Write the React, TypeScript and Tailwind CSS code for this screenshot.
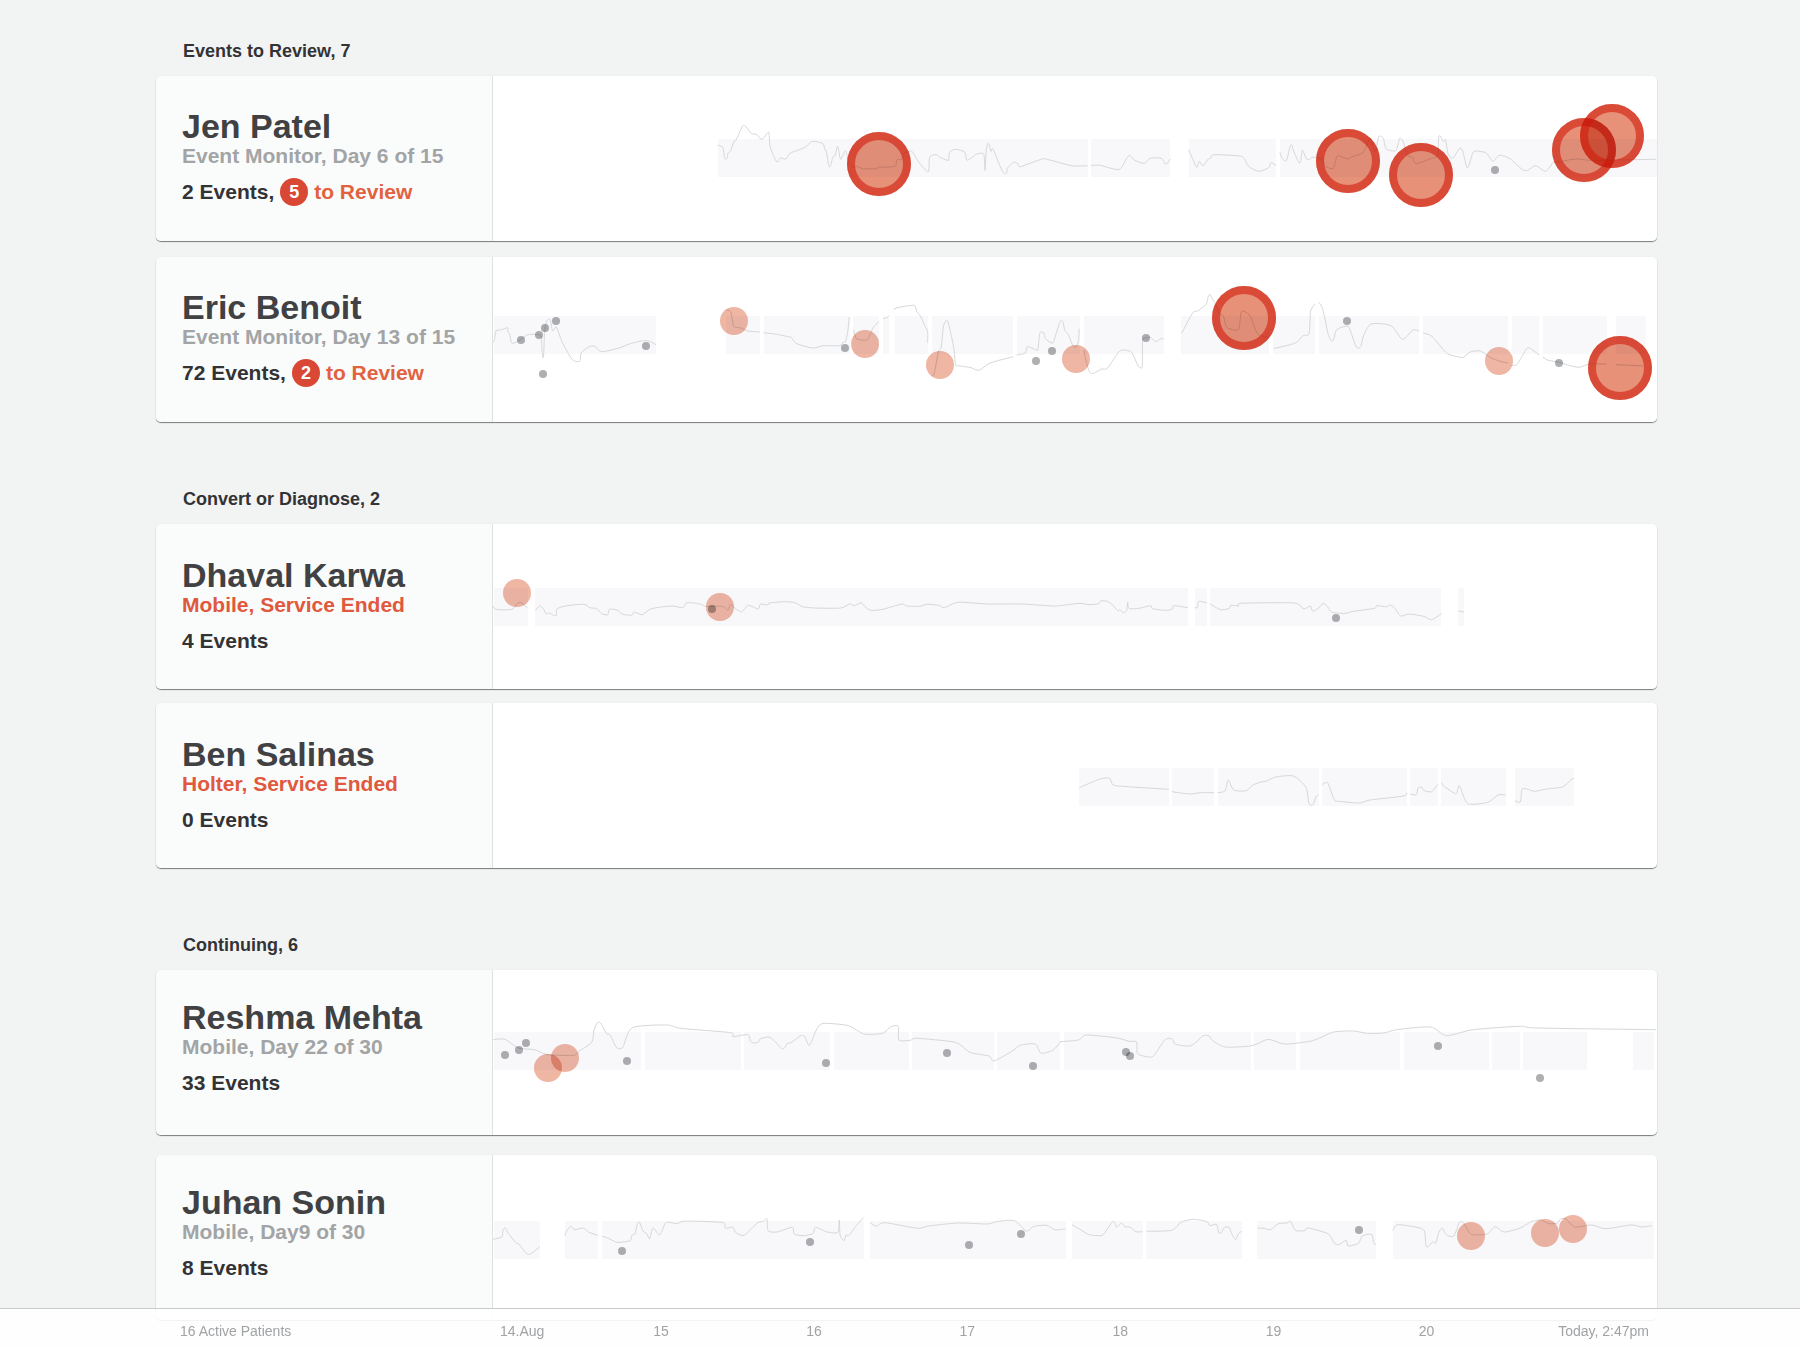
type Point = [number, number];
type Mark = { size: 'dot' | 'event' | 'review'; at: Point[] };
/** A block of hand-sampled polylines: origin in lane units, samples per unit on each axis. */
type Trace = { origin: Point; scale: Point; lines: string[] };
type Patient = {
  name: string;
  service: string;
  ended?: boolean;
  events: string;
  review?: number;
  bandTop: number;
  bands: Point[];
  traces: Trace[];
  marks: Mark[];
};
type Group = { title: string; cards: string; info: string; patients: Patient[] };

const LANE_WIDTH = 1164;
const LANE_HEIGHT = 165;
const FINE: Point = [3, 3];
const WIDE: Point = [2.6133, 3];

const groups: Group[] = [
  {
    title: 'Events to Review, 7',
    cards: 'flex flex-col gap-4',
    info: 'pt-8',
    patients: [
      {
        name: 'Jen Patel',
        service: 'Event Monitor, Day 6 of 15',
        events: '2 Events,',
        review: 5,
        bandTop: 63,
        bands: [[225, 595], [598, 677], [696, 783], [787, 1164]],
        traces: [
          {
            origin: [207, -6],
            scale: FINE,
            lines: [
              '53,225 69,233 73,262 77,268 82,263 84,249 92,242 102,214 108,210 126,171 132,166 138,170 154,190 171,194 180,206 189,206 202,189 207,189 211,232 230,276 241,264 258,267 270,250 315,232 334,215 350,215 370,222 374,239 379,243 386,287 391,289 399,260 405,257 413,229 422,268 434,244 439,246 446,278 457,291 469,289 490,296 530,296 535,292 585,289 590,270 606,268 612,250 632,243 638,247 660,281 685,305 689,261 709,254 720,262 742,271 746,270 749,246 766,238 794,246 801,271 829,253 851,252 855,301 857,270 859,238 864,220 868,226 873,244 879,237 903,295 914,311 921,307 922,295 941,277 953,281 961,290 1020,269 1037,267 1115,287 1163,287',
              '1173,286 1202,286 1222,292 1259,298 1282,262 1291,257 1304,271 1333,280 1350,265 1384,265 1397,283 1411,267',
            ],
          },
          {
            origin: [677, -6],
            scale: FINE,
            lines: [
              '56,239 80,292 87,274 99,287 115,267 122,265 132,254 208,258 223,266 236,289 266,304 296,293 303,278 319,287',
              '330,247 335,263 349,272 360,230 365,225 372,246 387,278 392,274 397,241 409,266 418,269 427,262 456,267 466,289 490,295 500,260 508,258 534,267 546,260 579,248 596,213 602,207 616,246 626,200 640,205 648,236 670,243 680,238 689,205 700,216 713,256 728,262 738,281 782,266 803,257 806,202 811,198 820,215 827,209 834,251 848,265 869,235 878,243 890,291 897,286 911,245 940,246 951,251 969,274 988,256 1020,266 1056,298 1073,301 1097,287 1127,304 1150,277 1165,277 1200,269 1225,267 1260,271 1320,270 1458,268',
            ],
          },
        ],
        marks: [
          { size: 'review', at: [[386, 88], [855, 85], [928, 99], [1091, 74], [1119, 60]] },
          { size: 'dot', at: [[1002, 94]] },
        ],
      },
      {
        name: 'Eric Benoit',
        service: 'Event Monitor, Day 13 of 15',
        events: '72 Events,',
        review: 2,
        bandTop: 59,
        bands: [
          [1, 163], [233, 267], [271, 357], [360, 386], [390, 396], [402, 435], [439, 520], [524, 587],
          [591, 671], [688, 776], [780, 822], [826, 926], [930, 1015], [1019, 1046], [1050, 1114], [1123, 1153],
        ],
        traces: [
          {
            origin: [-13, -7],
            scale: WIDE,
            lines: [
              '33,280 38,268 42,242 54,240 73,233 72,245 77,250 82,278 91,278 107,268 125,254 152,254 160,262 162,300 165,323 167,300 169,242 174,214 179,208 184,210 189,241 193,241 200,231 215,277 240,327 254,335 262,332 264,309 285,290 300,289 318,305 363,294 390,282 428,272 445,275 460,284',
              '643,181 651,181 657,192 662,227 668,232 682,234 700,243 732,246',
              '741,248 775,253 806,260 813,262 828,281 870,294 898,287 940,287 950,276 955,276 961,246 965,201',
              '976,240 984,266 1009,271 1016,262 1028,232 1043,214',
              '1053,206 1064,203 1069,197',
              '1083,180 1087,174 1134,166 1141,184 1151,198 1165,233 1170,245 1170,278',
              '1181,377 1187,370 1198,306 1205,292 1211,230 1217,214 1222,214 1229,243 1238,293 1243,345 1250,347 1283,353 1304,361 1333,339 1393,320',
              '1402,315 1425,309 1430,290 1454,300 1458,298 1463,250 1468,246 1474,249 1477,265 1496,280 1502,264 1515,217 1520,212 1524,217 1528,240 1537,252 1549,286 1558,290 1564,272 1566,236',
            ],
          },
          {
            origin: [567, -7],
            scale: WIDE,
            lines: [
              '62,300 69,337 78,367 88,370 109,357 124,355 156,303 182,303 190,312 204,348 211,353 215,349 216,270 224,264 236,262 250,275 262,267 270,266',
              '318,250 347,188 360,183 382,163 387,141 392,133 398,146 408,165 415,189 427,198 436,232 466,239 473,189 481,184 498,200 515,250 535,260 546,262',
              '558,294 569,293 615,279 635,257 651,251 655,183 667,162',
              '676,157 684,169 692,204 700,250 709,272 715,269 723,239 750,228 758,240 773,288 781,294 787,287 793,258 813,222 865,227 895,268 922,240 939,243',
              '949,249 972,259 1010,309 1035,319 1054,322 1072,306 1098,303 1126,323 1150,334 1170,339',
              '1181,346 1191,346 1199,336 1218,298 1224,293 1235,300 1252,315',
              '1262,322 1276,331 1305,337 1327,345 1357,352 1384,342 1428,342',
              '1453,344 1524,348',
            ],
          },
        ],
        marks: [
          { size: 'event', at: [[241, 64], [372, 87], [447, 108], [583, 102], [1006, 104]] },
          { size: 'review', at: [[751, 61], [1127, 111]] },
          {
            size: 'dot',
            at: [[28, 83], [46, 78], [52, 71], [63, 64], [153, 89], [50, 117], [352, 91], [543, 104], [559, 94], [653, 81], [854, 64], [1066, 106]],
          },
        ],
      },
    ],
  },
  {
    title: 'Convert or Diagnose, 2',
    cards: 'flex flex-col gap-[14px]',
    info: 'pt-[33px]',
    patients: [
      {
        name: 'Dhaval Karwa',
        service: 'Mobile, Service Ended',
        ended: true,
        events: '4 Events',
        bandTop: 64,
        bands: [[1, 35], [42, 695], [702, 714], [717, 948], [965, 971]],
        traces: [
          {
            origin: [-13, 46],
            scale: WIDE,
            lines: [
              '32,104 41,118 83,118 98,100 108,98 124,114',
              '144,121 156,108 166,117 173,132 181,129 192,136 200,136 201,117 223,108 271,103 287,113 305,116 318,131 334,134 338,118 358,120 372,132 396,136 403,126 424,134 448,116 502,108 530,113 541,98 576,102 590,109 634,109 648,121 655,103 670,118 684,125 701,106 727,117 733,102 752,105 757,99 796,95 823,98 843,110 875,114 943,114 965,102 978,107 996,98 1006,110 1022,121 1053,118 1102,102 1115,108 1151,109 1167,103 1199,106 1214,113 1250,97 1328,102 1412,102 1496,108 1516,107',
            ],
          },
          {
            origin: [567, 46],
            scale: WIDE,
            lines: [
              '0,107 52,100 76,104 101,101 106,93 120,93 135,102 151,122 156,119 166,128 174,122 177,96 180,115 207,115 237,107 242,116 275,121 294,117 297,107 335,113',
              '352,113 359,112 363,94 383,99',
              '391,101 420,119 443,115 446,106 467,108 472,100 588,98 620,101 638,117 654,108 661,124 680,110 687,100 699,110 711,127 745,130 767,124 822,115 828,107 853,110 861,105 874,113 890,138 912,132 950,139 971,149 997,131',
              '1041,123 1056,126',
            ],
          },
        ],
        marks: [
          { size: 'event', at: [[24, 69], [227, 83]] },
          { size: 'dot', at: [[219, 85], [843, 94]] },
        ],
      },
      {
        name: 'Ben Salinas',
        service: 'Holter, Service Ended',
        ended: true,
        events: '0 Events',
        bandTop: 65,
        bands: [[586, 676], [679, 721], [725, 826], [829, 914], [917, 945], [948, 1013], [1022, 1081]],
        traces: [
          {
            origin: [567, -133],
            scale: WIDE,
            lines: [
              '51,653 97,630 118,624 131,626 139,645 175,650 284,658',
              '292,663 301,667 344,672 366,668 403,668',
              '412,668 431,663 438,633 442,633 454,660 486,662 504,645 525,636 540,633 564,621 610,618 643,652 650,698 657,706 663,700 669,680 676,675',
              '685,644 694,638 701,641 717,690 730,694 783,699 810,690 898,678 906,668',
              '915,672 931,674 936,653 946,652 950,661 969,666 978,657 987,643',
              '997,638 1004,649 1033,671 1038,665 1042,647 1047,655 1060,693 1073,703 1118,697 1145,675 1165,675',
              '1189,692 1203,696 1207,658 1220,657 1241,664 1270,657 1313,651 1338,627 1343,626',
            ],
          },
        ],
        marks: [],
      },
    ],
  },
  {
    title: 'Continuing, 6',
    cards: 'flex flex-col gap-5',
    info: 'pt-[29px]',
    patients: [
      {
        name: 'Reshma Mehta',
        service: 'Mobile, Day 22 of 30',
        events: '33 Events',
        bandTop: 62,
        bands: [
          [1, 148], [152, 248], [251, 337], [341, 416], [419, 501], [504, 567], [571, 758], [761, 803],
          [807, 907], [911, 996], [999, 1027], [1030, 1094], [1140, 1161],
        ],
        traces: [
          {
            origin: [-13, -10],
            scale: WIDE,
            lines: [
              '32,239 65,238 100,264 142,269 176,284 245,286 258,274 292,247 298,210 306,189 312,187 318,194 330,220 340,225 355,260 364,266 374,260 398,203 488,195 525,205 655,218 661,230 700,224 707,244 718,249 728,246 732,237 758,232 788,265 796,263 804,249 813,248 837,228 848,229 859,256 865,248 882,203 899,190 963,197 1003,222 1052,220 1074,200 1093,199 1095,240 1124,241 1142,235 1242,247 1280,277 1330,288 1343,303 1390,274 1412,256 1451,252 1464,278 1476,279 1498,270 1517,246 1516,246',
            ],
          },
          {
            origin: [567, -10],
            scale: WIDE,
            lines: [
              '0,245 48,240 69,225 150,234 180,244 200,246 203,281 233,291 246,286 272,242 284,235 294,238 302,253 342,257 373,228 382,226 391,229 399,242 432,261 502,257 544,238 587,252 660,242 712,217 765,213 803,220 847,219 880,209 968,201 1010,227 1080,209 1203,199 1248,204 1557,209',
            ],
          },
        ],
        marks: [
          { size: 'event', at: [[55, 98], [72, 88]] },
          {
            size: 'dot',
            at: [[12, 85], [26, 80], [33, 73], [134, 91], [333, 93], [454, 83], [540, 96], [633, 82], [637, 86], [945, 76], [1047, 108]],
          },
        ],
      },
      {
        name: 'Juhan Sonin',
        service: 'Mobile, Day9 of 30',
        events: '8 Events',
        bandTop: 66,
        bands: [[1, 47], [72, 105], [109, 371], [377, 573], [579, 650], [653, 749], [764, 883], [900, 1161]],
        traces: [
          {
            origin: [-13, 35],
            scale: WIDE,
            lines: [
              '32,148 57,141 60,120 66,114 74,130 93,157 102,163 121,190 130,193 141,184 156,171',
              '222,137 226,124 237,109 247,119 270,114 285,127 309,136',
              '318,139 334,144 358,157 392,152 397,136 405,132 411,103 417,97 426,123 436,131 443,147 452,114 468,135 475,124 487,97 514,101 530,94 575,94 636,98 641,115 661,111 667,126 690,136 725,99 741,94 750,86 753,122 776,126 816,112 821,132 845,137 870,131 877,112 907,126 935,127 939,90 941,135 951,152 957,134 963,138 981,110 1002,83',
              '1020,98 1036,109 1058,98 1143,115 1172,108 1250,99 1326,102 1350,95 1396,92 1428,123 1448,109 1480,106 1502,119 1530,117',
            ],
          },
          {
            origin: [567, 35],
            scale: WIDE,
            lines: [
              '31,104 55,120 76,134 107,137 115,131 139,94 148,111 161,99 170,110 184,112 198,125 216,125',
              '226,124 292,121 316,97 348,88 384,95 391,107 409,103 415,128 422,128 428,114 441,111 449,131 459,149 466,131 475,124',
              '516,114 533,115 550,119 571,101 593,99 603,94 615,121 640,122 648,114 700,131 716,158 728,164 748,151 753,168 780,160 790,138 814,133 820,160 826,163',
              '870,122 883,104 940,114 953,126 956,166 961,171 974,155 982,160 990,127 999,114 1010,135 1029,138 1043,99 1051,95 1060,109 1075,133 1116,132 1137,110 1161,126 1203,114 1230,96 1256,90 1280,101 1300,99 1308,87 1322,87 1345,111 1390,105 1426,116 1492,105 1521,111 1546,107',
            ],
          },
        ],
        marks: [
          { size: 'event', at: [[978, 81], [1052, 78], [1080, 74]] },
          { size: 'dot', at: [[129, 96], [317, 87], [476, 90], [528, 79], [866, 75]] },
        ],
      },
    ],
  },
];

const days = ['14.Aug', '15', '16', '17', '18', '19', '20'];

/** Softened path through every sample of a line. */
function toPath(line: string, { origin, scale }: Trace): string {
  const pts = line.split(' ').map((pair): Point => {
    const [x, y] = pair.split(',').map(Number);
    return [origin[0] + x / scale[0], origin[1] + y / scale[1]];
  });
  const soft = 0.12;
  return pts.reduce((d, p, i) => {
    if (i === 0) return `M${p[0].toFixed(1)} ${p[1].toFixed(1)}`;
    const a = pts[i - 1];
    const before = pts[i - 2] ?? a;
    const after = pts[i + 1] ?? p;
    const c = [
      a[0] + (p[0] - before[0]) * soft,
      a[1] + (p[1] - before[1]) * soft,
      p[0] - (after[0] - a[0]) * soft,
      p[1] - (after[1] - a[1]) * soft,
      p[0],
      p[1],
    ];
    return `${d}C${c.map((n) => n.toFixed(1)).join(' ')}`;
  }, '');
}

function MarkShape({ size, x, y }: { size: Mark['size']; x: number; y: number }) {
  if (size === 'review') {
    return (
      <>
        <circle cx={x} cy={y} r={32} className="fill-[#e79179] mix-blend-multiply" />
        <circle cx={x} cy={y} r={28} strokeWidth={8} className="fill-none stroke-[#d01b0b]/60" />
      </>
    );
  }
  if (size === 'event') {
    return <circle cx={x} cy={y} r={14} className="fill-[#efb6a4] mix-blend-multiply" />;
  }
  return <circle cx={x} cy={y} r={4} className="fill-[#aeb0b2] mix-blend-multiply" />;
}

function Timeline({ patient }: { patient: Patient }) {
  return (
    <svg
      viewBox={`0 0 ${LANE_WIDTH} ${LANE_HEIGHT}`}
      className="isolate block h-auto min-w-0 flex-1 self-start bg-white"
      role="img"
      aria-label={`Heart rate and events for ${patient.name}`}
    >
      {patient.bands.map(([from, to]) => (
        <rect key={from} x={from} y={patient.bandTop} width={to - from} height={38} className="fill-[#f8f8fa]" />
      ))}
      {patient.traces.flatMap((trace) =>
        trace.lines.map((line) => (
          <path key={line} d={toPath(line, trace)} strokeLinejoin="round" className="fill-none stroke-[#d6d7d9]" />
        )),
      )}
      {patient.marks.flatMap(({ size, at }) =>
        at.map(([x, y]) => <MarkShape key={`${size}-${x}`} size={size} x={x} y={y} />),
      )}
    </svg>
  );
}

function PatientCard({ patient, info }: { patient: Patient; info: string }) {
  return (
    <article className="flex overflow-hidden rounded-[5px] bg-white shadow-[0_1px_1px_#77797c,0_0_1px_#d5d8d8]">
      <div className={`w-[337px] shrink-0 border-r border-[#dfe1e1] bg-[#fafcfb] pl-[26px] ${info}`}>
        <h3 className="text-[34px] leading-9 font-bold text-[#414143]">{patient.name}</h3>
        <p className={`text-[21px] leading-6 font-bold ${patient.ended ? 'text-[#e0583d]' : 'text-[#a2a4a6]'}`}>
          {patient.service}
        </p>
        <p className="mt-[10px] flex h-7 items-center gap-[6px] text-[21px] leading-7 font-bold text-[#333335]">
          {patient.events}
          {patient.review !== undefined && (
            <>
              <span className="flex size-7 items-center justify-center rounded-full bg-[#d94834] text-[18px] text-white">
                {patient.review}
              </span>
              <a href="#review" className="text-[#e2623f]">
                to Review
              </a>
            </>
          )}
        </p>
      </div>
      <Timeline patient={patient} />
    </article>
  );
}

export default function App() {
  return (
    <div className="min-h-screen bg-[#f2f4f4] font-['Liberation_Sans',Arial,sans-serif]">
      <main className="flex flex-col gap-[65px] pt-[39px] pr-[143px] pb-7 pl-[156px]">
        {groups.map((group) => (
          <section key={group.title}>
            <h2 className="mb-[13px] pl-[27px] text-[18px] leading-6 font-bold text-[#333335]">{group.title}</h2>
            <div className={group.cards}>
              {group.patients.map((patient) => (
                <PatientCard key={patient.name} patient={patient} info={group.info} />
              ))}
            </div>
          </section>
        ))}
      </main>
      <footer className="fixed inset-x-0 bottom-0 flex h-10 border-t border-[#c9cbcb] bg-white/90 pt-3 pr-[151px] pl-[180px] text-[14px] leading-5 text-[#a0a2a4]">
        <p className="w-80 shrink-0">16 Active Patients</p>
        <ol className="grid flex-1 grid-cols-[repeat(6,153fr)_230fr]">
          {days.map((day, i) => (
            <li key={day} className={i === days.length - 1 ? 'flex justify-between' : undefined}>
              <span>{day}</span>
              {i === days.length - 1 && <span>Today, 2:47pm</span>}
            </li>
          ))}
        </ol>
      </footer>
    </div>
  );
}
